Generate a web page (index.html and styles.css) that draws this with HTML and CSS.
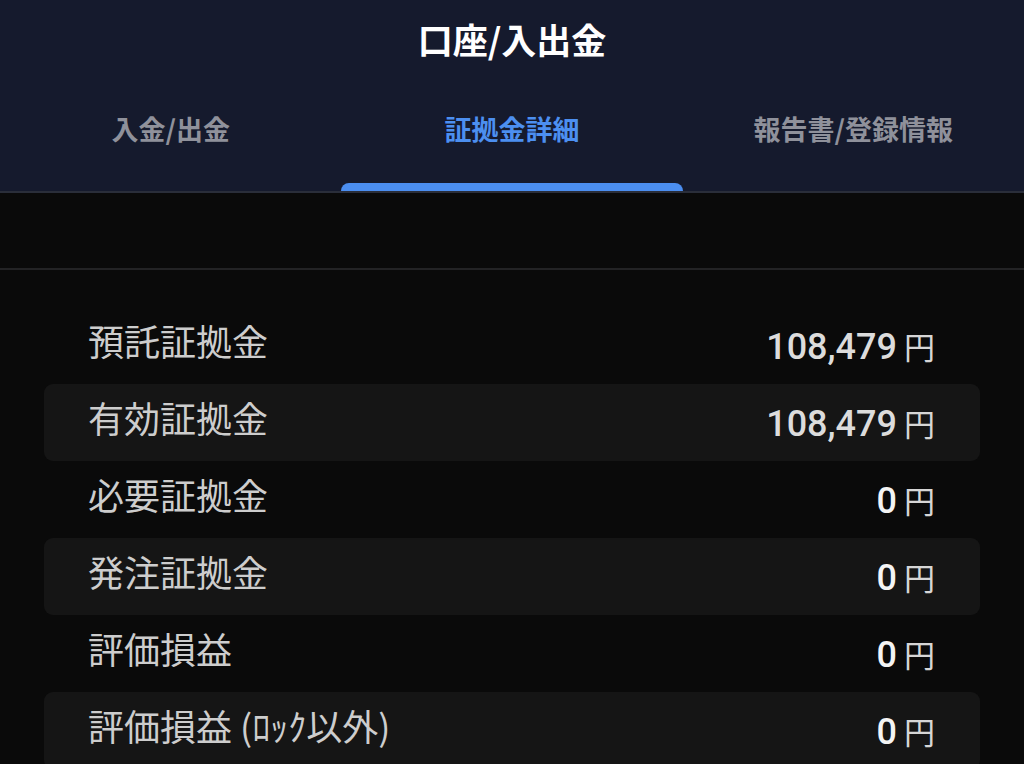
FILE: index.html
```html
<!DOCTYPE html>
<html lang="ja">
<head>
<meta charset="utf-8">
<link rel="stylesheet" href="styles.css">
</head>
<body>
<header class="top">
  <h1 class="title">口座/入出金</h1>
  <nav class="tabs">
    <div class="tab">入金/出金</div>
    <div class="tab active">証拠金詳細</div>
    <div class="tab">報告書/登録情報</div>
  </nav>
</header>
<div class="band"></div>
<main class="list">
  <div class="row"><span class="label">預託証拠金</span><span class="value"><span class="num">108,479</span><span class="yen">円</span></span></div>
  <div class="row alt"><span class="label">有効証拠金</span><span class="value"><span class="num">108,479</span><span class="yen">円</span></span></div>
  <div class="row"><span class="label">必要証拠金</span><span class="value"><span class="num zero">0</span><span class="yen">円</span></span></div>
  <div class="row alt"><span class="label">発注証拠金</span><span class="value"><span class="num zero">0</span><span class="yen">円</span></span></div>
  <div class="row"><span class="label">評価損益</span><span class="value"><span class="num zero">0</span><span class="yen">円</span></span></div>
  <div class="row alt"><span class="label">評価損益 (ﾛｯｸ以外)</span><span class="value"><span class="num zero">0</span><span class="yen">円</span></span></div>
</main>
</body>
</html>
```

FILE: styles.css
```css
html, body {
  margin: 0;
  padding: 0;
  background: #0a0a0a;
  font-family: "Noto Sans CJK JP", "Noto Sans", sans-serif;
  overflow: hidden;
}

.top {
  background: #151a2d;
  border-bottom: 2px solid #2a2e3a;
}

.title {
  margin: 0;
  height: 84px;
  line-height: 78px;
  padding-bottom: 0;
  box-sizing: border-box;
  text-align: center;
  color: #ffffff;
  font-size: 35px;
  font-weight: 700;
}

.tabs {
  display: grid;
  grid-template-columns: 1fr 1fr 1fr;
  height: 107px;
}

.tab {
  display: flex;
  align-items: center;
  justify-content: center;
  padding-bottom: 18px;
  color: #8f919b;
  font-size: 27px;
  font-weight: 700;
  position: relative;
}

.tab.active {
  color: #4c8ff0;
}

.tab.active::after {
  content: "";
  position: absolute;
  left: 0;
  right: 0;
  bottom: 0;
  height: 8px;
  background: #4b8ef0;
  border-radius: 8px 8px 0 0;
}

.band {
  height: 75px;
  background: #0a0a0a;
  border-bottom: 2px solid #232325;
}

.list {
  display: flex;
  flex-direction: column;
  padding: 37px 44px 0 44px;
}

.row {
  display: flex;
  align-items: center;
  justify-content: space-between;
  height: 77px;
  padding: 0 45px 0 44px;
  border-radius: 9px;
}

.row.alt {
  background: #151515;
}

.label {
  color: #cdcdcd;
  font-size: 36px;
  font-weight: 400;
  padding-bottom: 12px;
}

.value {
  display: flex;
  align-items: baseline;
  gap: 7px;
  padding-top: 0;
}

.num {
  font-family: Roboto, "Noto Sans", sans-serif;
  font-size: 36px;
  font-weight: 500;
  color: #dcdcdc;
}

.num.zero {
  color: #f4f4f4;
}

.yen {
  color: #d6d6d6;
  font-size: 31px;
  font-weight: 400;
}
```
